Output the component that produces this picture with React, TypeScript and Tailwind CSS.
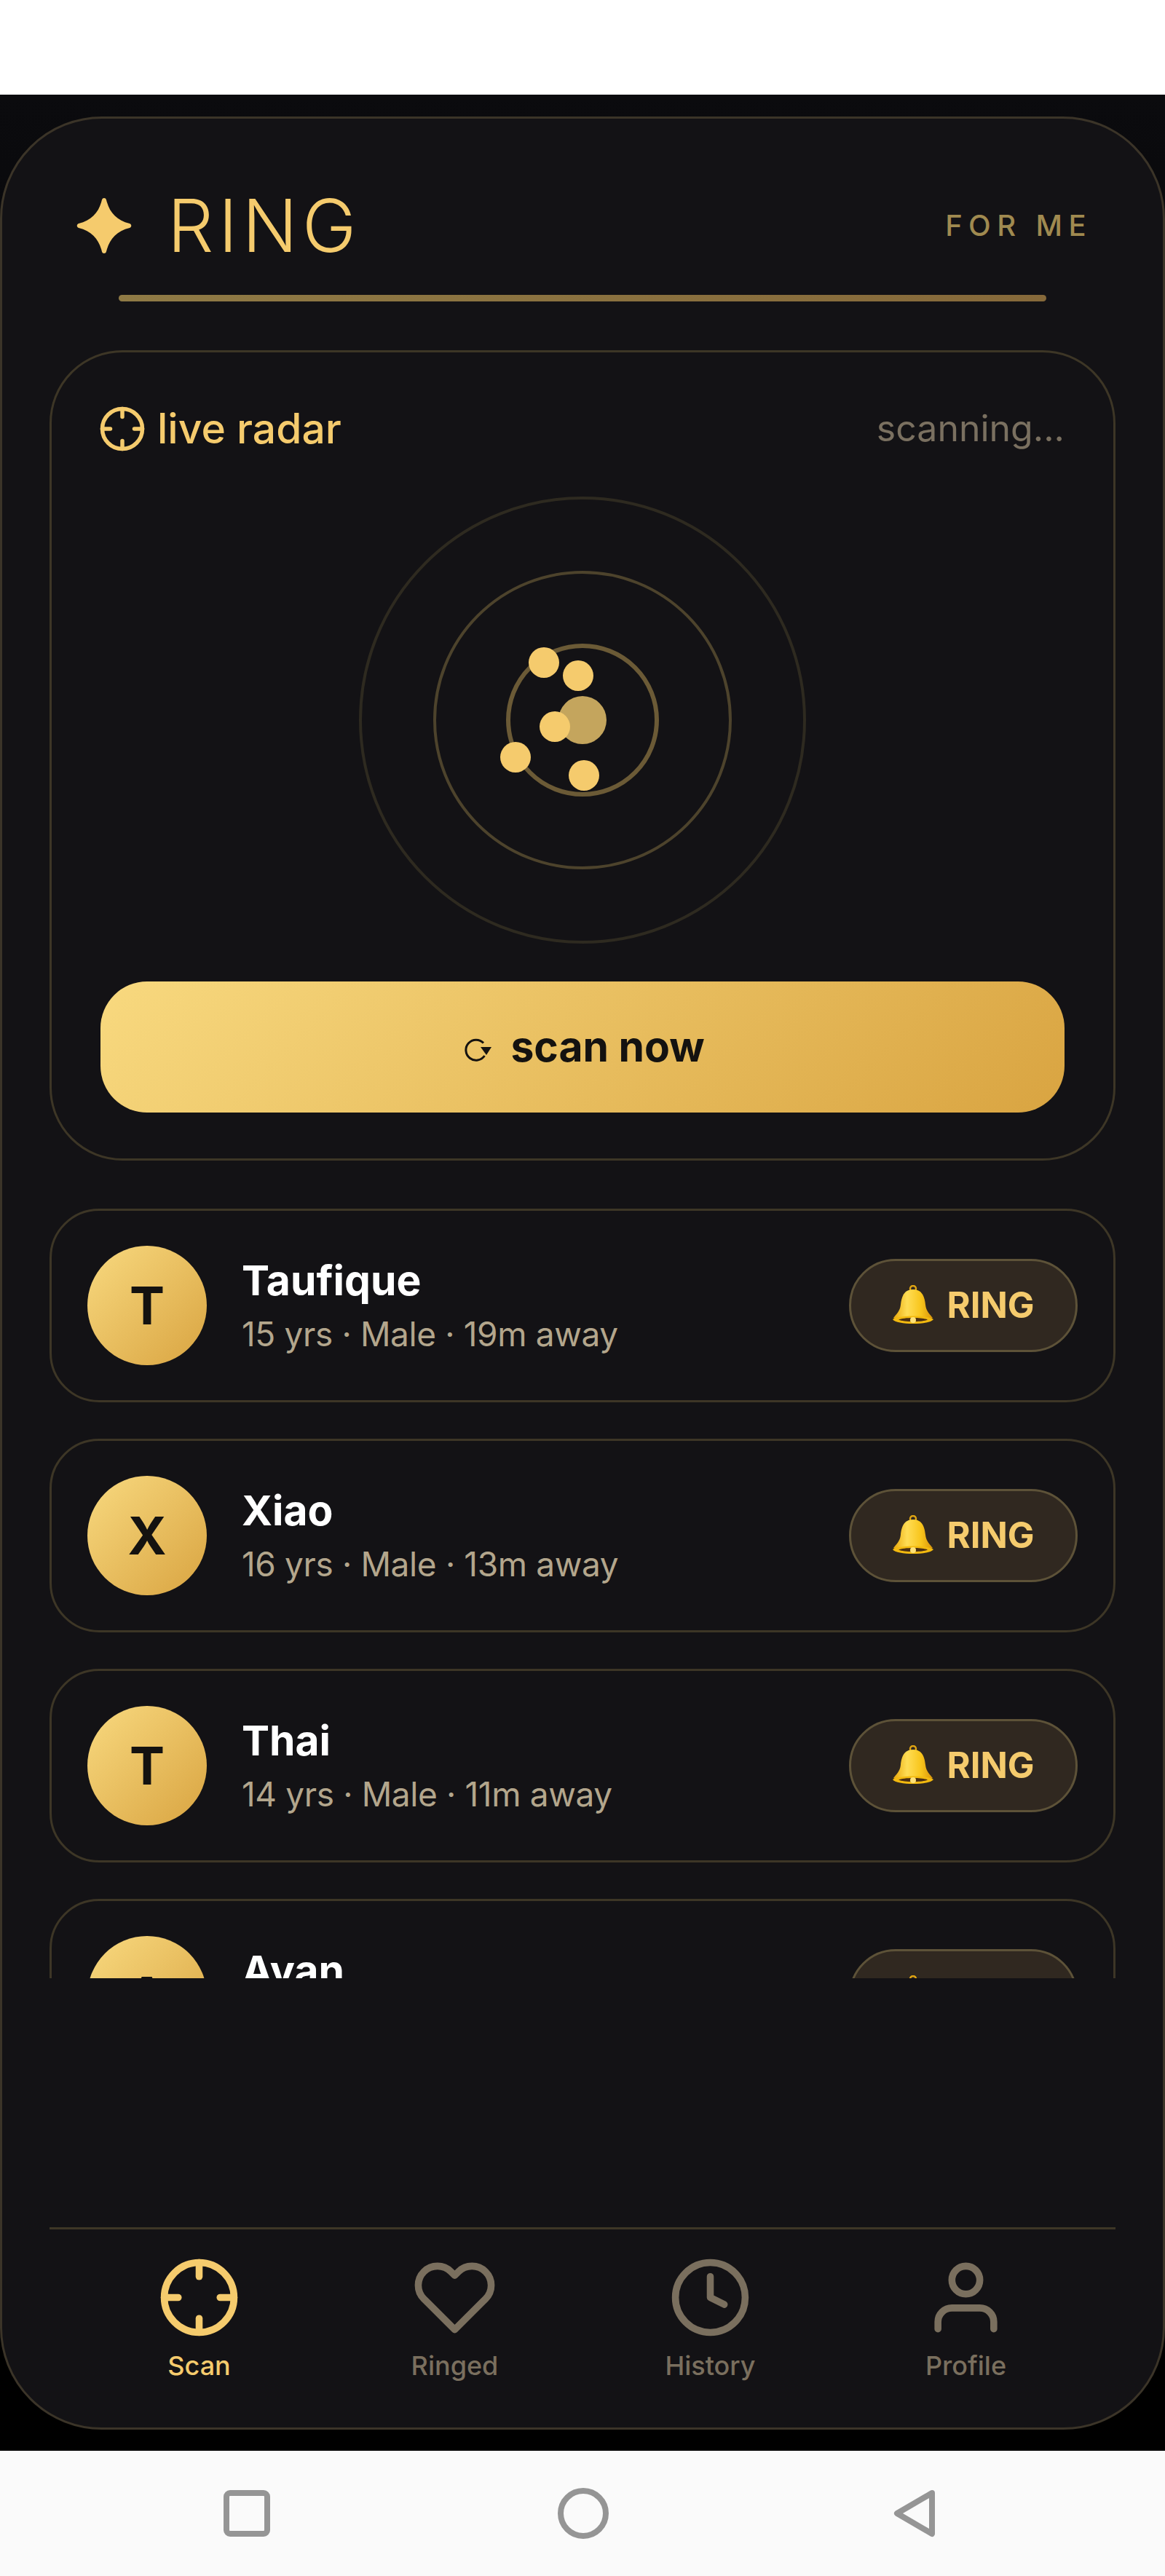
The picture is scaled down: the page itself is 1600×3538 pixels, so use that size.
import React from 'react';
import { FiCrosshair, FiHeart, FiClock, FiUser } from 'react-icons/fi';

const people = [
  { name: 'Taufique', info: '15 yrs · Male · 19m away' },
  { name: 'Xiao', info: '16 yrs · Male · 13m away' },
  { name: 'Thai', info: '14 yrs · Male · 11m away' },
  { name: 'Ayan', info: '17 yrs · Male · 8m away' },
];

// blips on the radar, centre point relative to the 614px square
const blips = [
  { left: 254, top: 228 },
  { left: 301, top: 246 },
  { left: 269, top: 316 },
  { left: 215, top: 358 },
  { left: 309, top: 383 },
];

const tabs = [
  { label: 'Scan', Icon: FiCrosshair, active: true },
  { label: 'Ringed', Icon: FiHeart, active: false },
  { label: 'History', Icon: FiClock, active: false },
  { label: 'Profile', Icon: FiUser, active: false },
];

const Bell = () => (
  <svg width="58" height="56" viewBox="0 0 58 56" className="shrink-0">
    <defs>
      <linearGradient id="bellBody" x1="0" y1="0" x2="1" y2="0">
        <stop offset="0" stopColor="#e8a80c" />
        <stop offset="0.35" stopColor="#ffdd55" />
        <stop offset="0.7" stopColor="#f8c51c" />
        <stop offset="1" stopColor="#d9940a" />
      </linearGradient>
    </defs>
    <circle cx="29" cy="5" r="4" fill="none" stroke="#e0a512" strokeWidth="2.5" />
    <path d="M29 6C16 6 13 17 12 27C11 36 6 40 2 45C10 51 48 51 56 45C52 40 47 36 46 27C45 17 42 6 29 6Z" fill="url(#bellBody)" />
    <path d="M1 47C8 41 50 41 57 47C52 55 6 55 1 47Z" fill="#f2b90f" />
    <path d="M9 47.5C16 44 42 44 49 47.5C42 51 16 51 9 47.5Z" fill="#4a2f14" />
    <circle cx="29" cy="48" r="4" fill="#ffe27a" />
  </svg>
);

const PersonRow = ({ name, info }: { name: string; info: string }) => (
  <div className="flex h-[266px] shrink-0 items-center rounded-[68px] border-[3px] border-[#3d3626] pl-[49px] pr-[49px]">
    <div className="flex h-[164px] w-[164px] shrink-0 items-center justify-center rounded-full bg-[linear-gradient(135deg,#f8d97f,#d9a441)] text-[72px] font-bold text-[#141210]">
      {name[0]}
    </div>
    <div className="ml-[48px] flex-1">
      <div className="text-[57px] leading-[68px] font-bold text-white">{name}</div>
      <div className="mt-[9px] text-[46px] leading-[60px] tracking-[-0.008em] text-[#b3a68c]">{info}</div>
    </div>
    <div className="flex h-[128px] w-[314px] shrink-0 items-center justify-center gap-[17px] rounded-full border-[3px] border-[#5d5238] bg-[#302820] text-[49px] font-bold text-[#f5cb6d]">
      <Bell />
      <span>RING</span>
    </div>
  </div>
);

export default function App() {
  return (
    <div className="flex h-[3538px] w-[1600px] flex-col bg-white font-['Inter',sans-serif]">
      <div className="h-[130px] shrink-0 bg-white" />

      <div className="flex h-[1px] flex-1 flex-col bg-gradient-to-b from-[#0b0b0e] to-black pt-[30px] pb-[29px]">
        <div className="flex flex-1 flex-col rounded-[140px] border-[3px] border-[#3b3428] bg-[#131215]">
          {/* header */}
          <div className="flex h-[245px] shrink-0 flex-col">
            <div className="flex flex-1 items-center justify-between pt-[52px] pl-[102px] pr-[97px]">
              <div className="flex items-center gap-[49px]">
                <svg width="76" height="76" viewBox="0 0 76 76">
                  <path
                    d="M38 0C41 0 41 3 42 6C46 20 56 31 73 35C76 36 76 40 73 41C56 45 46 56 42 70C41 73 41 76 38 76C35 76 35 73 34 70C30 56 20 45 3 41C0 40 0 36 3 35C20 31 30 20 34 6C35 3 35 0 38 0Z"
                    fill="#f5cb6d"
                  />
                </svg>
                <span className="text-[100px] leading-none font-light tracking-[0.065em] text-[#f5cb6d]">RING</span>
              </div>
              <span className="text-[40px] font-medium tracking-[0.21em] text-[#a08a50]">FOR ME</span>
            </div>
            <div className="mx-[160px] mb-[-6px] h-[9px] rounded-full bg-gradient-to-r from-[#8f7a45] to-[#86693a]" />
          </div>

          <div className="flex flex-col px-[65px] pt-[73px]">
            {/* radar card */}
            <div className="flex h-[1113px] flex-col rounded-[100px] border-[3px] border-[#3d3626] px-[67px] pt-[67px]">
              <div className="flex items-center justify-between">
                <div className="flex items-center gap-[15px] text-[57px] leading-[68px] font-medium text-[#f5cb6d]">
                  <FiCrosshair size={66} strokeWidth={2} className="-ml-[3px]" />
                  <span>live radar</span>
                </div>
                <span className="text-[50px] text-[#7a7060]">scanning...</span>
              </div>

              <div className="relative mx-auto mt-[56px] h-[614px] w-[614px] shrink-0">
                <div className="absolute inset-0 rounded-full border-[4px] border-[#2e2a20]" />
                <div className="absolute inset-[102px] rounded-full border-[4px] border-[#4d432c]" />
                <div className="absolute inset-[202px] rounded-full border-[6px] border-[#6b5a36]" />
                <div className="absolute top-[274px] left-[274px] h-[66px] w-[66px] rounded-full bg-[#c4a55d]" />
                {blips.map((b) => (
                  <div
                    key={b.left}
                    className="absolute h-[42px] w-[42px] -translate-x-1/2 -translate-y-1/2 rounded-full bg-[#f5cb6d]"
                    style={{ left: b.left, top: b.top }}
                  />
                ))}
              </div>

              <div className="mt-[52px] flex h-[180px] shrink-0 items-center justify-center gap-[25px] rounded-[64px] bg-[linear-gradient(135deg,#f8d97f,#d9a441)] pl-[6px] text-[57px] font-bold text-[#141210]">
                <svg width="38" height="32" viewBox="0 0 38 32" fill="none" stroke="#141210" strokeWidth="3" className="mt-[8px]">
                  <path d="M26 6.5A14 14 0 1 0 27.5 24" />
                  <path d="M22 12L37 12L30 23Z" fill="#141210" stroke="none" />
                </svg>
                <span>scan now</span>
              </div>
            </div>

            {/* people list, cut off at the bottom */}
            <div className="mt-[66px] flex h-[1057px] flex-col gap-[50px] overflow-hidden">
              {people.map((p) => (
                <PersonRow key={p.name} name={p.name} info={p.info} />
              ))}
            </div>
          </div>

          {/* bottom tabs */}
          <div className="mx-[65px] mt-auto flex h-[275px] shrink-0 justify-between border-t-[3px] border-[#3d3626] px-[30px] pt-[36px]">
            {tabs.map(({ label, Icon, active }) => (
              <div
                key={label}
                className={`flex w-[351px] flex-col items-center ${active ? 'text-[#f5cb6d]' : 'text-[#7a6f5e]'}`}
              >
                <Icon size={115} strokeWidth={2} />
                <span className="mt-[13px] text-[36px] leading-[46px] font-medium">{label}</span>
              </div>
            ))}
          </div>
        </div>
      </div>

      {/* android nav bar */}
      <div className="flex h-[172px] shrink-0 items-center bg-[#fafafa] pl-[307px]">
        <svg width="64" height="64" viewBox="0 0 64 64" fill="none" stroke="#959595" strokeWidth="8">
          <rect x="4" y="4" width="56" height="56" rx="5" />
        </svg>
        <svg width="70" height="70" viewBox="0 0 70 70" fill="none" stroke="#959595" strokeWidth="8" className="ml-[395px]">
          <circle cx="35" cy="35" r="31" />
        </svg>
        <svg width="58" height="66" viewBox="0 0 58 66" fill="none" stroke="#959595" strokeWidth="8" strokeLinejoin="round" className="ml-[391px]">
          <path d="M53 5L5 33L53 61Z" />
        </svg>
      </div>
    </div>
  );
}
